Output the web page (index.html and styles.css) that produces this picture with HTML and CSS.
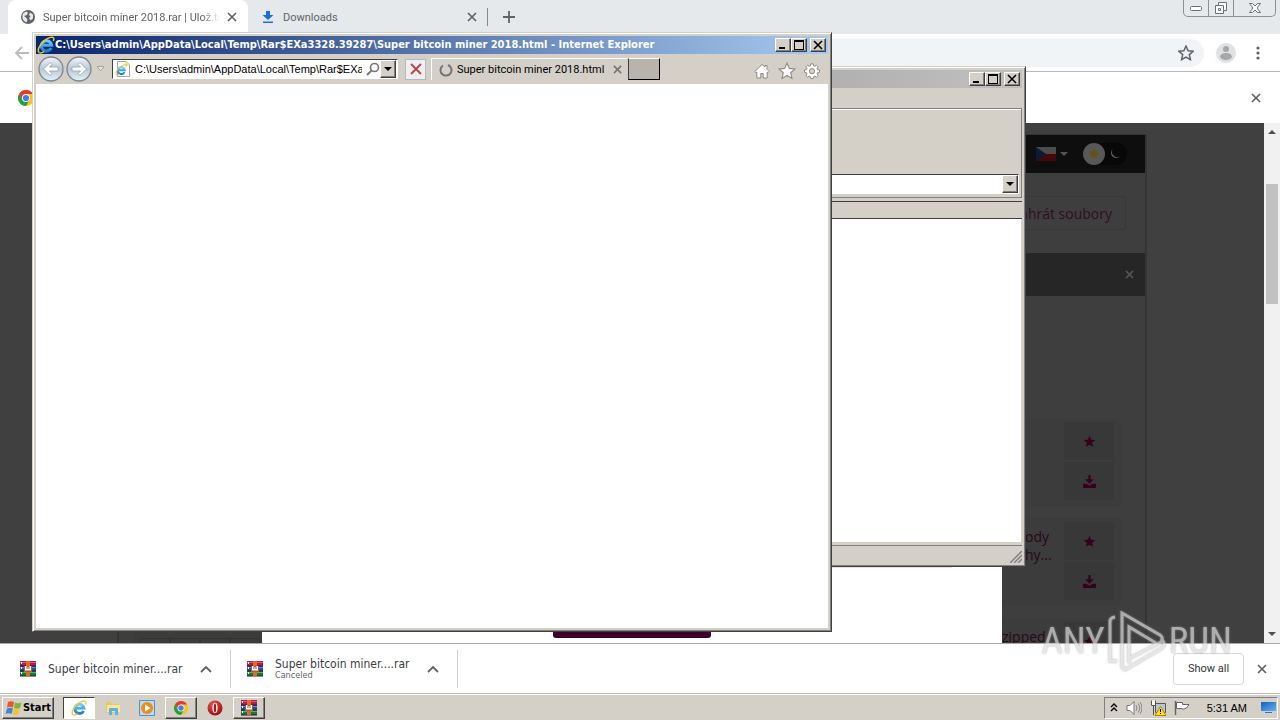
FILE: index.html
```html
<!DOCTYPE html>
<html lang="en">
<head>
    <meta charset="UTF-8">
    <meta name="viewport" content="width=device-width, initial-scale=1.0">
    <title>Desktop</title>
    <link rel="stylesheet" href="styles.css">
</head>
<body>
    <svg class="sprites" aria-hidden="true">
        <defs>
            <linearGradient id="ie-blue" x1="0" y1="0" x2="0" y2="1">
                <stop offset="0" stop-color="#6fd0f7"/>
                <stop offset="1" stop-color="#1b7fd0"/>
            </linearGradient>
            <linearGradient id="orb" x1="0" y1="0" x2="0" y2="1">
                <stop offset="0" stop-color="#f4f7fa"/>
                <stop offset=".5" stop-color="#b9c6d2"/>
                <stop offset="1" stop-color="#e2f4fb"/>
            </linearGradient>
            <linearGradient id="screen" x1="0" y1="0" x2="1" y2="1">
                <stop offset="0" stop-color="#1c5fb8"/>
                <stop offset="1" stop-color="#5eb0f5"/>
            </linearGradient>
            <radialGradient id="opera-red" cx=".4" cy=".3" r=".8">
                <stop offset="0" stop-color="#f0584e"/>
                <stop offset="1" stop-color="#8e0608"/>
            </radialGradient>
        </defs>
        <symbol id="ie" viewBox="0 0 16 16">
            <path d="M12.600 10.800A4.600 4.600 0 1 1 13 8.200H4.500" fill="none" stroke="url(#ie-blue)" stroke-width="2.800"/>
            <path d="M2 14.800C-1 12 5 3 12 1.200c3-.7 3.500 1 2.500 3.300" fill="none" stroke="#f4c52c" stroke-width="1.300"/>
            <path d="M2 14.800c1.200.7 3-.2 4.500-1.200" fill="none" stroke="#f4c52c" stroke-width="1.300"/>
        </symbol>
        <symbol id="chrome" viewBox="0 0 16 16">
            <circle cx="8" cy="8" r="8" fill="#fbc116"/>
            <path d="M1.070 4A8 8 0 0 1 14.930 4H8L4.600 10Z" fill="#e33b2e"/>
            <path d="M1.070 4A8 8 0 0 0 8 16L11.500 10H4.600Z" fill="#21a045"/>
            <circle cx="8" cy="8" r="4" fill="#fff"/>
            <circle cx="8" cy="8" r="3.100" fill="#3f7fea"/>
        </symbol>
        <symbol id="winrar" viewBox="0 0 16 16">
            <path d="M0 0h16v5H0z" fill="#b01e4e"/>
            <path d="M0 1h16v1H0z" fill="#e0567e"/>
            <path d="M0 5h16v5H0z" fill="#2c48a8"/>
            <path d="M0 6h16v1H0z" fill="#6b8be0"/>
            <path d="M0 10h16v5H0z" fill="#137a37"/>
            <path d="M0 11h16v1H0z" fill="#4cb968"/>
            <path d="M0 4.500h16v1H0zM0 9.500h16v1H0zM0 14.500h16v1H0z" fill="#2a1a28"/>
            <path d="M6 0h4v15H6z" fill="#e06a24"/>
            <path d="M1 1h1v2H1zM1 6h1v2H1zM1 11h1v2H1z" fill="#fff"/>
            <path d="M4 5h8v6H4z" fill="#a85a34"/>
            <path d="M5 5v4.500h6V5H9.500v3h-1V6h-1v2h-1V5z" fill="#fff"/>
        </symbol>
        <symbol id="cross" viewBox="0 0 10 10">
            <path d="M1 1l8 8M9 1 1 9" fill="none" stroke="currentColor" stroke-width="1.700"/>
        </symbol>
        <symbol id="win-min" viewBox="0 0 12 10"><path d="M2 7h6v2H2z"/></symbol>
        <symbol id="win-max" viewBox="0 0 12 10"><path d="M1 0h10v10H1zM2 2v7h8V2z" fill-rule="evenodd"/></symbol>
        <symbol id="win-close" viewBox="0 0 12 10"><path d="M2 1l8 8M10 1 2 9" stroke="#000" stroke-width="1.600"/></symbol>
        <symbol id="triangle" viewBox="0 0 8 4"><path d="M0 0h8L4 4z" fill="currentColor"/></symbol>
        <symbol id="chevron" viewBox="0 0 12 8"><path d="M1 7l5-5 5 5" fill="none" stroke="currentColor" stroke-width="1.800"/></symbol>
        <symbol id="star" viewBox="0 0 16 16">
            <path d="M8 1l2.100 4.700 5 .5-3.800 3.400 1.100 5L8 12l-4.400 2.600 1.100-5L.9 6.200l5-.5z"/>
        </symbol>
        <symbol id="save" viewBox="0 0 12 12">
            <path d="M5 0h2v4h3L6 8 2 4h3zM0 8h3l3 2 3-2h3v4H0z" fill="currentColor"/>
        </symbol>
    </svg>

    <div class="desktop">
        <main class="browser">
            <div class="tab-strip">
                <div class="tab active">
                    <svg class="icon" viewBox="0 0 16 16"><circle cx="8" cy="8" r="7" fill="#5f6368"/><path d="M3 4.500l3-2 2 1-1 2.500-3 1 2.500 2 1 2-1 2.500C3 12 1.500 9 3 4.500zM10 3.500l3 2v4l-2.500 2L9 9l1.500-1.500L9 6z" fill="#e8eaed"/></svg>
                    <span class="tab-title">Super bitcoin miner 2018.rar | Ulož.to</span>
                    <button class="plain" aria-label="Close tab"><svg class="x10"><use href="#cross"/></svg></button>
                </div>
                <div class="tab">
                    <svg class="icon" viewBox="0 0 16 16"><path d="M6 2h4v4h3.500L8 11 2.500 6H6zM3 12.500h10V14H3z" fill="#1a6fe0"/></svg>
                    <span class="tab-title">Downloads</span>
                    <button class="plain" aria-label="Close tab"><svg class="x10"><use href="#cross"/></svg></button>
                </div>
                <button class="plain new-tab" aria-label="New tab"><svg width="12" height="12" viewBox="0 0 12 12"><path d="M6 0v12M0 6h12" stroke="#5f6368" stroke-width="1.800"/></svg></button>
                <div class="caption-buttons">
                    <button aria-label="Minimize"><svg width="12" height="5" viewBox="0 0 12 5"><rect x=".5" y=".5" width="11" height="4" rx="1" fill="#fff" stroke="#6c7177"/></svg></button>
                    <button aria-label="Restore"><svg width="14" height="12" viewBox="0 0 14 12"><path d="M4.500 3V.5h8v8H10M1.500 3.500h8v8h-8zM4.500 6.500h2v2h-2z" fill="#fff" stroke="#6c7177"/></svg></button>
                    <button class="wide" aria-label="Close"><svg width="12" height="10" viewBox="0 0 12 10"><path d="M.5.5h3L6 3 8.500.5h3L8 5l3.500 4.500h-3L6 7 3.500 9.500h-3L4 5z" fill="#fff" stroke="#6c7177"/></svg></button>
                </div>
            </div>

            <div class="toolbar">
                <button class="plain" aria-label="Back"><svg width="16" height="14" viewBox="0 0 16 14"><path d="M15 7H2M8 1 2 7l6 6" fill="none" stroke="#b9bcbf" stroke-width="1.800"/></svg></button>
                <div class="omnibox">
                    <button class="plain" aria-label="Bookmark"><svg width="16" height="16" viewBox="0 0 16 16" fill="none" stroke="#5f6368" stroke-width="1.500"><use href="#star"/></svg></button>
                </div>
                <button class="plain" aria-label="Profile"><svg width="20" height="20" viewBox="0 0 20 20"><circle cx="10" cy="10" r="10" fill="#dfe1e3"/><circle cx="10" cy="6" r="3" fill="#a5a7a9"/><ellipse cx="10" cy="13.500" rx="6" ry="3.500" fill="#a5a7a9"/></svg></button>
                <button class="plain menu" aria-label="Menu"><svg width="4" height="14" viewBox="0 0 4 14" fill="#5f6368"><circle cx="2" cy="2" r="1.600"/><circle cx="2" cy="7" r="1.600"/><circle cx="2" cy="12" r="1.600"/></svg></button>
            </div>

            <div class="info-bar">
                <svg class="icon"><use href="#chrome"/></svg>
                <button class="plain" aria-label="Dismiss"><svg class="x10"><use href="#cross"/></svg></button>
            </div>

            <div class="viewport">
                <div class="page-scroll">
                    <div class="page">
                        <div class="site-bar">
                            <button class="plain lang" aria-label="Language">
                                <svg width="20" height="14" viewBox="0 0 20 14"><path d="M0 0h20v7H0z" fill="#4c4c4c"/><path d="M0 7h20v7H0z" fill="#450809"/><path d="M0 0l10 7-10 7z" fill="#0b1a38"/></svg>
                                <svg class="tri"><use href="#triangle"/></svg>
                            </button>
                            <button class="plain theme" aria-label="Theme">
                                <svg width="22" height="22" viewBox="0 0 22 22"><circle cx="11" cy="11" r="11" fill="#585858"/><path d="M11 6l1.300 1.800 2.200-.3-.3 2.200L16 11l-1.800 1.300.3 2.200-2.200-.3L11 16l-1.300-1.800-2.200.3.300-2.200L6 11l1.800-1.300-.3-2.200 2.200.3z" fill="#65501f"/></svg>
                                <svg width="10" height="10" viewBox="0 0 10 10"><path d="M3 0a5 5 0 1 0 7 7A5 5 0 0 1 3 0z" fill="#626262"/></svg>
                            </button>
                        </div>
                        <div class="upload-row"><a class="upload" href="#">Nahrát soubory</a></div>
                        <div class="notice"><button class="plain" aria-label="Close"><svg width="9" height="9"><use href="#cross"/></svg></button></div>
                        <div class="results">
                            <div class="file">
                                <a class="file-name" href="#"></a>
                                <div class="file-actions">
                                    <button aria-label="Favourite"><svg class="act"><use href="#star"/></svg></button>
                                    <button aria-label="Download"><svg class="act"><use href="#save"/></svg></button>
                                </div>
                            </div>
                            <div class="file">
                                <a class="file-name short" href="#">ody<br>hy...</a>
                                <div class="file-actions">
                                    <button aria-label="Favourite"><svg class="act"><use href="#star"/></svg></button>
                                    <button aria-label="Download"><svg class="act"><use href="#save"/></svg></button>
                                </div>
                            </div>
                            <div class="file">
                                <div class="pages"><i></i><i></i><i></i><i></i></div>
                                <a class="file-name" href="#">zipped</a>
                                <div class="file-actions">
                                    <button aria-label="Favourite"><svg class="act"><use href="#star"/></svg></button>
                                </div>
                            </div>
                        </div>
                    </div>
                    <div class="dialog">
                        <hr>
                        <button class="dialog-button" aria-label="Download"></button>
                    </div>
                </div>
                <div class="scrollbar">
                    <svg class="tri up"><use href="#triangle"/></svg>
                    <div class="thumb"></div>
                    <svg class="tri"><use href="#triangle"/></svg>
                </div>
            </div>

            <div class="download-shelf">
                <div class="download">
                    <svg class="icon"><use href="#winrar"/></svg>
                    <div class="download-text">Super bitcoin miner....rar</div>
                    <button class="plain" aria-label="Options"><svg width="12" height="8"><use href="#chevron"/></svg></button>
                </div>
                <div class="download">
                    <svg class="icon"><use href="#winrar"/></svg>
                    <div class="download-text">Super bitcoin miner....rar<small>Canceled</small></div>
                    <button class="plain" aria-label="Options"><svg width="12" height="8"><use href="#chevron"/></svg></button>
                </div>
                <button class="show-all">Show all</button>
                <button class="plain" aria-label="Close shelf"><svg class="x10"><use href="#cross"/></svg></button>
            </div>
        </main>

        <footer class="taskbar">
            <button class="start">
                <svg width="18" height="16" viewBox="0 0 18 16"><path d="M3 2c2-1 4-1 6 0L8 7.500c-2-1-4-1-6 0z" fill="#e8572a"/><path d="M10 2.500c2 1 4 1 6.500 0L15 8c-2 1-4 1-6 0z" fill="#7fb82e"/><path d="M2 8.500c2-1 4-1 6 0L6.500 14c-2-1-4-1-6 0z" fill="#3d85d8"/><path d="M9 9c2 1 4 1 6 0l-1.500 5.500c-2 1-4 1-6 0z" fill="#f6c22c"/></svg>
                Start
            </button>
            <button class="task pressed" aria-label="Internet Explorer"><svg class="icon"><use href="#ie"/></svg></button>
            <button class="task flat" aria-label="Explorer"><svg class="icon" viewBox="0 0 16 16"><path d="M1 2h5l1 2h7v9H1z" fill="#e8c860"/><path d="M2 5h13v7H2z" fill="#f8e69a"/><path d="M4 15V9q0-1 1-1h7q1 0 1 1v6h-3v-4H7v4z" fill="#5ab2e6"/></svg></button>
            <button class="task flat" aria-label="Media Player"><svg class="icon" viewBox="0 0 16 16"><path d="M.5.5h15v15H.5z" fill="#b8dcf6" stroke="#4f92cf"/><circle cx="8" cy="8" r="6" fill="#f28a1a"/><path d="M6 4.500 11.500 8 6 11.500z" fill="#fff"/></svg></button>
            <button class="task" aria-label="Chrome"><svg class="icon small"><use href="#chrome"/></svg></button>
            <button class="task flat" aria-label="Opera"><svg class="icon" viewBox="0 0 16 16"><circle cx="8" cy="8" r="7.500" fill="url(#opera-red)"/><ellipse cx="8" cy="8" rx="2.500" ry="5.200" fill="#fff"/><ellipse cx="8" cy="8" rx="1.200" ry="4.600" fill="#b01216"/></svg></button>
            <button class="task" aria-label="WinRAR"><svg class="icon"><use href="#winrar"/></svg></button>
            <div class="tray">
                <svg width="8" height="9" viewBox="0 0 8 9"><path d="M1 4l3-3 3 3M1 8l3-3 3 3" fill="none" stroke="#000" stroke-width="1.400"/></svg>
                <svg class="icon" viewBox="0 0 16 16"><path d="M1 5.500h3l4-4v13l-4-4H1z" fill="#fff" stroke="#777"/><path d="M10 5q2 3 0 6M12 3.500q3.500 4.500 0 9M14 2q4 6 0 12" fill="none" stroke="#888"/></svg>
                <svg class="icon" viewBox="0 0 16 16"><path d="M5.500 3.500h10v9h-10z" fill="#b9c6cf" stroke="#555"/><path d="M1.500.5v5h4v-5M3.500 5v10" fill="#fff" stroke="#555"/><path d="M10.500 6.500 16 15.500H5z" fill="#ffdf1c" stroke="#a98a00"/><path d="M10 9h1v3h-1zM10 13h1v1h-1z"/></svg>
                <svg class="icon" viewBox="0 0 16 16"><path d="M1.500 1v14" stroke="#666" stroke-width="1.500"/><path d="M2.500 2.500h6v2h6.500l-2 3-3 1.500H8V8.500H2.500z" fill="#fff" stroke="#666"/></svg>
                <time>5:31 AM</time>
                <svg width="15" height="13" viewBox="0 0 15 13"><path d="M0 1h15v9H0z" fill="url(#screen)"/><path d="M4 11h7v1H4z" fill="#2f6fbf"/></svg>
            </div>
        </footer>

        <section class="window winrar">
            <div class="title-bar inactive">
                <div class="controls">
                    <button aria-label="Minimize"><svg><use href="#win-min"/></svg></button>
                    <button aria-label="Maximize"><svg><use href="#win-max"/></svg></button>
                    <button class="close" aria-label="Close"><svg><use href="#win-close"/></svg></button>
                </div>
            </div>
            <div class="menu-bar"></div>
            <div class="rar-tools">
                <div class="rar-path">
                    <input type="text" aria-label="Path">
                    <button class="drop" aria-label="Open list"><svg class="tri"><use href="#triangle"/></svg></button>
                </div>
            </div>
            <div class="rar-columns"></div>
            <div class="rar-list"></div>
            <div class="rar-status">
                <svg width="12" height="12" viewBox="0 0 12 12"><path d="M0 12 12 0M4 12l8-8M8 12l4-4" stroke="#808080" stroke-width="1.500"/></svg>
            </div>
        </section>

        <section class="window explorer">
            <div class="title-bar">
                <svg class="icon big"><use href="#ie"/></svg>
                <h1>C:\Users\admin\AppData\Local\Temp\Rar$EXa3328.39287\Super bitcoin miner 2018.html - Internet Explorer</h1>
                <div class="controls">
                    <button aria-label="Minimize"><svg><use href="#win-min"/></svg></button>
                    <button aria-label="Maximize"><svg><use href="#win-max"/></svg></button>
                    <button class="close" aria-label="Close"><svg><use href="#win-close"/></svg></button>
                </div>
            </div>
            <div class="ie-bar">
                <button class="plain orb" aria-label="Back"><svg viewBox="0 0 26 26"><circle cx="13" cy="13" r="12" fill="url(#orb)" stroke="#7d8790" stroke-width="1.300"/><path d="M5.500 13 12 6.500l2 2-2.500 2.500H20v4h-8.500l2.500 2.500-2 2z" fill="#fff" stroke="#8fa1b3" stroke-width=".8"/></svg></button>
                <button class="plain orb" aria-label="Forward"><svg viewBox="0 0 26 26"><circle cx="13" cy="13" r="12" fill="url(#orb)" stroke="#7d8790" stroke-width="1.300"/><path d="M20.500 13 14 6.500l-2 2 2.500 2.500H6v4h8.500L12 17.500l2 2z" fill="#fff" stroke="#8fa1b3" stroke-width=".8"/></svg></button>
                <svg class="recent" width="9" height="6" viewBox="0 0 9 6"><path d="M1 .5h7L4.500 5z" fill="#e6e2dc" stroke="#aaa49c"/></svg>
                <div class="address">
                    <svg class="icon" viewBox="0 0 16 16"><path d="M2.500.5h9l3 3v12h-12z" fill="#fff" stroke="#a8a898"/><path d="M11 0v4h4" fill="#fff09a" stroke="#d8c860"/><use href="#ie" x="0" y="3" width="12" height="12"/></svg>
                    <input type="text" aria-label="Address" value="C:\Users\admin\AppData\Local\Temp\Rar$EXa3328.39287\Super bitcoin miner 2018.html">
                    <svg width="14" height="14" viewBox="0 0 14 14"><circle cx="8.500" cy="5.500" r="4" fill="none" stroke="#777" stroke-width="1.600"/><path d="M5.500 8.500 1 13" stroke="#777" stroke-width="2"/></svg>
                    <button class="drop" aria-label="Show history"><svg class="tri"><use href="#triangle"/></svg></button>
                </div>
                <button class="stop" aria-label="Stop"><svg width="12" height="12" viewBox="0 0 12 12"><path d="M1 1l10 10M11 1 1 11" stroke="#c0474b" stroke-width="2"/></svg></button>
                <div class="ie-tab">
                    <svg width="14" height="14" viewBox="0 0 14 14"><path d="M9 2a5.500 5.500 0 1 1-5 .5" fill="none" stroke="#77736f" stroke-width="2"/></svg>
                    <span>Super bitcoin miner 2018.html</span>
                    <button class="plain" aria-label="Close tab"><svg width="9" height="9"><use href="#cross"/></svg></button>
                </div>
                <button class="ie-new" aria-label="New tab"></button>
                <div class="ie-tools">
                    <button class="plain" aria-label="Home"><svg class="icon" viewBox="0 0 16 16"><path d="M8 1.500.8 8.500l1.200 1.200.8-.7v6h4v-4.500h2.400V15h4V9l.8.700 1.200-1.200-2.200-2.200V2.500h-2V4z" fill="#fff" stroke="#8d8984"/></svg></button>
                    <button class="plain" aria-label="Favorites"><svg class="icon big" viewBox="0 0 16 16" fill="#fff" stroke="#8d8984"><use href="#star" width="16" height="16"/></svg></button>
                    <button class="plain" aria-label="Tools"><svg class="icon" viewBox="0 0 16 16"><path d="M6.800.8h2.400l.4 2 1.200.5 1.700-1.100 1.600 1.600L13 5.500l.5 1.200 2 .3v2.300l-2 .4-.5 1.200 1.100 1.700-1.600 1.600-1.700-1.100-1.200.5-.4 1.900H6.800l-.4-1.900-1.200-.5-1.700 1.100-1.600-1.600L3 10.900l-.5-1.200-2-.4V7l2-.3L3 5.500 1.900 3.800l1.600-1.600 1.700 1.100 1.200-.5z" fill="#fff" stroke="#8d8984"/><circle cx="8" cy="8.200" r="2.600" fill="#d4d0c8" stroke="#8d8984"/></svg></button>
                </div>
            </div>
            <div class="ie-page"></div>
        </section>

        <div class="watermark">
            <span>ANY</span>
            <svg width="60" height="64" viewBox="0 0 60 64"><path d="M10 52H3V12q0-3 5-4M15 58V4l38 22q4 3 1 6M22 54V18l27 16M15 58q2 4 6 1l34-20q4-3 1-7L21 50" fill="none" stroke="#dcdcdc" stroke-width="3"/></svg>
            <span>RUN</span>
        </div>
    </div>
</body>
</html>
```
FILE: styles.css
```css
* {
    box-sizing: border-box;
}
body {
    margin: 0;
    font-family: Roboto, Tahoma, sans-serif;
    font-size: 11px;
    color: #000;
    overflow: hidden;
}
button, input {
    font: inherit;
    color: inherit;
    margin: 0;
    padding: 0;
}
button {
    display: flex;
    align-items: center;
    justify-content: center;
}
a {
    text-decoration: none;
}
svg {
    flex: none;
}
.sprites {
    position: absolute;
    width: 0;
    height: 0;
}
.plain {
    border: 0;
    background: none;
    color: #5f6368;
}
.icon {
    width: 16px;
    height: 16px;
}
.icon.small {
    width: 14px;
    height: 14px;
}
.icon.big {
    width: 18px;
    height: 18px;
}
.x10 {
    width: 10px;
    height: 10px;
}
.tri {
    width: 8px;
    height: 4px;
}
.desktop {
    position: relative;
    display: flex;
    flex-direction: column;
    height: 100vh;
    overflow: hidden;
}

/* chrome */
.browser {
    flex: 1;
    min-height: 0;
    display: flex;
    flex-direction: column;
    background: #fff;
}
.tab-strip {
    display: flex;
    height: 34px;
    padding-left: 8px;
    background: #e5e9ec;
}
.tab {
    display: flex;
    align-items: center;
    width: 240px;
    padding: 0 10px 0 12px;
    gap: 7px;
    color: #5f6368;
    border-right: 1px solid transparent;
}
.tab.active {
    background: #fff;
    border-radius: 8px 8px 0 0;
}
.tab:not(.active) {
    margin: 8px 0;
    border-right-color: #85898d;
}
.tab-title {
    flex: 1;
    overflow: hidden;
    white-space: nowrap;
}
.active .tab-title {
    mask-image: linear-gradient(to right, #000 90%, transparent);
}
.new-tab {
    width: 42px;
}
.caption-buttons {
    display: flex;
    height: 17px;
    margin-left: auto;
    margin-right: 4px;
    border: 1px solid #8b9095;
    border-top: 0;
    border-radius: 0 0 5px 5px;
}
.caption-buttons button {
    width: 25px;
    border: 0;
    border-right: 1px solid #8b9095;
    background: none;
}
.caption-buttons .wide {
    width: 41px;
    border-right: 0;
}
.toolbar {
    display: flex;
    align-items: center;
    height: 38px;
    padding: 0 16px 0 14px;
    border-bottom: 1px solid #b6b8ba;
}
.omnibox {
    flex: 1;
    display: flex;
    justify-content: flex-end;
    height: 28px;
    margin: 0 12px 0 60px;
    padding-right: 10px;
    border-radius: 14px;
    background: #f0f4f7;
}
.menu {
    width: 12px;
    margin-left: 16px;
}
.info-bar {
    display: flex;
    align-items: center;
    justify-content: space-between;
    height: 51px;
    padding: 0 19px 0 18px;
}
.viewport {
    flex: 1;
    min-height: 0;
    display: flex;
    border-bottom: 1px solid #a9a9a9;
}
.page-scroll {
    position: relative;
    flex: 1;
    overflow: hidden;
    padding: 11px 117px 0;
    background: #404040;
}
.page {
    height: 600px;
    border: 2px solid #343434;
    border-top-width: 1px;
    background: #3e3e3e;
    font-family: "Open Sans", "Noto Sans", sans-serif;
    font-size: 14px;
}
.site-bar {
    display: flex;
    align-items: center;
    justify-content: flex-end;
    gap: 10px;
    height: 38px;
    padding-right: 18px;
    background: #0e0e0e;
}
.lang {
    gap: 4px;
    padding: 0 5px;
    height: 28px;
    color: #555;
}
.theme {
    gap: 5px;
    padding-right: 7px;
    border-radius: 12px;
    background: #080808;
}
.upload-row {
    display: flex;
    align-items: center;
    justify-content: flex-end;
    height: 80px;
    padding-right: 19px;
}
.upload {
    padding: 7px 13px 5px;
    border: 1px solid #383838;
    border-radius: 3px;
    line-height: 20px;
    color: #320c24;
}
.notice {
    display: flex;
    align-items: center;
    justify-content: flex-end;
    height: 43px;
    padding-right: 11px;
    background: #262626;
}
.notice .plain {
    color: #555;
}
.results {
    display: flex;
    flex-direction: column;
    gap: 12px;
    padding: 122px 24px 0 14px;
}
.file {
    display: flex;
    justify-content: flex-end;
    height: 88px;
    padding: 4px 7px;
    background: #3c3c3c;
}
.file-name {
    width: 62px;
    padding-top: 6px;
    line-height: 18px;
    color: #250819;
}
.file-name.short {
    padding-left: 23px;
}
.file-actions {
    display: flex;
    flex-direction: column;
    gap: 2px;
    width: 50px;
}
.file-actions button {
    height: 38px;
    border: 0;
    background: #383838;
    color: #36001f;
    fill: #36001f;
}
.act {
    width: 13px;
    height: 13px;
}
.pages {
    display: flex;
    margin-right: auto;
    padding-top: 16px;
}
.pages i {
    width: 30px;
    height: 30px;
    border: 1px solid #333;
}
.dialog {
    position: absolute;
    top: 100px;
    bottom: 0;
    left: 262px;
    right: 262px;
    display: flex;
    flex-direction: column;
    align-items: center;
    justify-content: space-between;
    padding-bottom: 5px;
    background: #fff;
}
.dialog hr {
    width: 640px;
    margin: 344px 0 0;
    border: 0;
    border-top: 1px solid #e2e2e2;
}
.dialog-button {
    width: 158px;
    height: 40px;
    border: 0;
    border-radius: 3px;
    background: #3f0029;
}
.scrollbar {
    display: flex;
    flex-direction: column;
    align-items: center;
    width: 16px;
    padding: 7px 0;
    background: #f1f1f1;
    color: #505050;
}
.scrollbar .up {
    transform: rotate(180deg);
}
.thumb {
    width: 12px;
    height: 120px;
    margin: 50px 0 auto;
    background: #c1c1c1;
}
.download-shelf {
    display: flex;
    align-items: center;
    height: 49px;
    padding-right: 13px;
}
.download {
    display: flex;
    align-items: center;
    width: 227px;
    height: 38px;
    padding: 0 18px 0 16px;
    border-right: 1px solid #d0d0d0;
}
.download:first-child {
    width: 231px;
    padding-left: 20px;
}
.download-text {
    flex: 1;
    margin-left: 12px;
    font-family: "DejaVu Sans Condensed", "DejaVu Sans", sans-serif;
    font-size: 12px;
    line-height: 14px;
    color: #3c4043;
}
.download-text small {
    display: block;
    font-size: 9px;
    line-height: 9px;
    color: #5f6368;
}
.show-all {
    width: 71px;
    height: 32px;
    margin-left: auto;
    margin-right: 13px;
    border: 1px solid #d4d6d9;
    border-radius: 4px;
    background: #fff;
    color: #333;
}

/* taskbar */
.taskbar {
    display: flex;
    align-items: center;
    height: 27px;
    padding: 1px 2px 0;
    border-top: 1px solid #c0bcb4;
    box-shadow: inset 0 1px #fff;
    background: #d4d0c8;
}
.start, .task, .drop, .controls button {
    border: 1px solid;
    border-color: #fff #404040 #404040 #fff;
    box-shadow: inset -1px -1px #808080;
    background: #d4d0c8;
}
.start {
    height: 22px;
    width: 52px;
    margin-right: 9px;
    font-family: "DejaVu Sans Condensed", "DejaVu Sans", sans-serif;
    font-weight: bold;
}
.task {
    width: 32px;
    height: 22px;
    margin-right: 2px;
}
.task.pressed {
    border-color: #404040 #fff #fff #404040;
    box-shadow: none;
    background: #fff;
}
.task.flat {
    border-color: transparent;
    box-shadow: none;
    background: none;
}
.tray {
    display: flex;
    align-items: center;
    gap: 8px;
    height: 22px;
    margin-left: auto;
    padding: 0 1px 0 5px;
    border: 1px solid;
    border-color: #808080 #fff #fff #808080;
}
.tray time {
    margin: 0 6px 0 9px;
    font-family: "Liberation Sans", Arial, sans-serif;
}

/* classic windows */
.window {
    position: absolute;
    display: flex;
    flex-direction: column;
    padding: 3px;
    border: 1px solid;
    border-color: #d4d0c8 #404040 #404040 #d4d0c8;
    box-shadow: inset 1px 1px #fff, inset -1px -1px #808080;
    background: #d4d0c8;
}
.explorer {
    left: 32px;
    top: 32px;
    width: 800px;
    height: 600px;
}
.winrar {
    left: 230px;
    top: 66px;
    width: 796px;
    height: 501px;
}
.title-bar {
    display: flex;
    align-items: center;
    height: 18px;
    padding: 0 2px 0 1px;
    background: linear-gradient(to right, #0a246a, #a6caf0);
    color: #fff;
}
.title-bar.inactive {
    background: linear-gradient(to right, #808080, #c0c0c0);
}
.title-bar h1 {
    margin: 0;
    font-family: "DejaVu Sans Condensed", "DejaVu Sans", sans-serif;
    font-size: 11px;
    line-height: 18px;
    white-space: nowrap;
}
.controls {
    display: flex;
    margin-left: auto;
}
.controls button {
    width: 16px;
    height: 14px;
}
.controls .close {
    margin-left: 3px;
}
.controls svg {
    width: 12px;
    height: 10px;
}
.ie-bar {
    display: flex;
    align-items: center;
    height: 30px;
    padding: 0 8px 0 1px;
}
.orb {
    width: 28px;
}
.orb svg {
    width: 26px;
    height: 26px;
}
.recent {
    margin: 0 7px 0 3px;
}
.address {
    display: flex;
    align-items: center;
    width: 286px;
    height: 20px;
    padding: 0 1px 0 2px;
    border: 1px solid;
    border-color: #404040 #fff #fff #404040;
    background: #fff;
}
.address input {
    flex: 1;
    min-width: 0;
    margin: 0 4px;
    border: 0;
    outline: 0;
    background: none;
    font-family: "Liberation Sans", Arial, sans-serif;
}
.drop {
    width: 16px;
    height: 18px;
}
.stop {
    width: 21px;
    height: 21px;
    margin: 0 5px 0 7px;
    border: 1px solid #b4b8c0;
    background: #f0f0f2;
}
.ie-tab {
    display: flex;
    align-items: center;
    width: 196px;
    height: 22px;
    padding: 0 5px 0 7px;
    gap: 4px;
    border: solid #fff;
    border-width: 1px 0 0 1px;
}
.ie-tab span {
    flex: 1;
    white-space: nowrap;
}
.ie-tab .plain {
    color: #77736f;
}
.ie-new {
    width: 32px;
    height: 22px;
    margin-left: 1px;
    border: 1px solid;
    border-color: #fff #000 #000 #404040;
    background: #b8b4ac;
}
.ie-tools {
    display: flex;
    gap: 8px;
    margin-left: auto;
    padding-top: 3px;
}
.ie-page {
    flex: 1;
    background: #fff;
}
.menu-bar {
    height: 20px;
}
.rar-tools {
    display: flex;
    align-items: flex-end;
    height: 90px;
    padding: 0 2px 3px;
    border: 1px solid #808080;
    box-shadow: inset 0 1px #fff;
}
.rar-path {
    flex: 1;
    display: flex;
    height: 20px;
    border: 1px solid;
    border-color: #404040 #fff #fff #404040;
    background: #fff;
}
.rar-path input {
    flex: 1;
    border: 0;
    outline: 0;
}
.rar-columns {
    height: 18px;
    margin-top: 3px;
    border-top: 1px solid #404040;
    border-bottom: 1px solid #404040;
}
.rar-list {
    flex: 1;
    border-right: 1px solid #d4d0c8;
    background: #fff;
}
.rar-status {
    display: flex;
    align-items: flex-end;
    justify-content: flex-end;
    height: 18px;
    margin-top: 3px;
    border-top: 1px solid #808080;
}

.watermark {
    position: absolute;
    right: 48px;
    bottom: 47px;
    display: flex;
    align-items: center;
    gap: 2px;
    font-family: "Liberation Sans Narrow", "Roboto Condensed", "Liberation Sans", sans-serif;
    font-size: 37px;
    line-height: 32px;
    color: #dcdcdc;
    opacity: .7;
    filter: drop-shadow(0 0 1px #999);
}
```
